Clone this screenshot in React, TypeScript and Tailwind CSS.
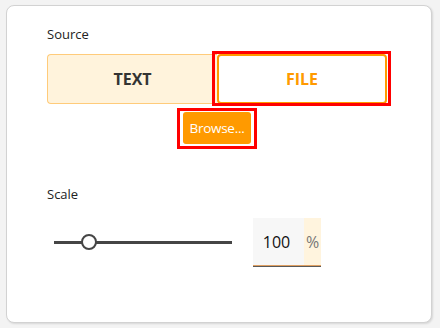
// Source / scale settings card
export default function App() {
  return (
    <div
      className="w-[440px] h-[328px] bg-[#f3f3f3] pt-[5px] pl-[6px]"
      style={{ fontFamily: '"Open Sans", "Noto Sans", sans-serif' }}
    >
      <div className="w-[426px] h-[318px] bg-white border border-[#d2d2d2] rounded-[8px] shadow-[1px_1px_2px_rgba(0,0,0,0.12)] pl-[40px] pt-[19px]">
        {/* Source */}
        <div className="text-[13px] leading-[18px] text-[#222]">Source</div>
        <div className="mt-[11px] w-[340px] h-[50px] grid grid-cols-2">
          <button className="bg-[#fff3dc] border border-[#ffcb7a] border-r-0 rounded-l-[4px] text-[16px] font-bold text-[#333]">
            TEXT
          </button>
          <div className="relative">
            <button className="w-full h-full bg-white border-2 border-[#ff9a00] rounded-[4px] text-[16px] font-bold text-[#ff9a00]">
              FILE
            </button>
            <span className="absolute -left-[5px] -right-[4px] -top-[3px] -bottom-[2px] border-[3px] border-[#ff0000] pointer-events-none" />
          </div>
        </div>
        <div className="w-[340px] flex justify-center mt-[8px]">
          <div className="relative">
            <button className="w-[68px] h-[32px] bg-[#ff9a00] rounded-[3px] text-white text-[13.5px] tracking-[-0.3px]">
              Browse...
            </button>
            <span className="absolute -left-[6px] -right-[6px] -top-[4px] -bottom-[5px] border-[3px] border-[#ff0000] pointer-events-none" />
          </div>
        </div>

        {/* Scale */}
        <div className="mt-[41px] text-[13px] leading-[18px] text-[#222]">Scale</div>
        <div className="mt-[15px] flex items-center pl-[7px]">
          <div className="relative w-[178px] h-[16px] flex items-center">
            <div className="w-full h-[3px] bg-[#454545]" />
            <div className="absolute left-[27px] top-0 w-[16px] h-[16px] rounded-full bg-white border-2 border-[#454545]" />
          </div>
          <div className="ml-[21px] flex h-[48px] border-b border-[#e0a062] shadow-[0_1px_0_#5a5a5a]">
            <div className="w-[51px] bg-[#f7f7f7] flex items-center justify-center text-[16px] text-[#111] pr-[4px]">
              100
            </div>
            <div className="w-[17px] bg-[#fff4de] flex items-center justify-center text-[16px] text-[#777]">
              %
            </div>
          </div>
        </div>
      </div>
    </div>
  );
}
